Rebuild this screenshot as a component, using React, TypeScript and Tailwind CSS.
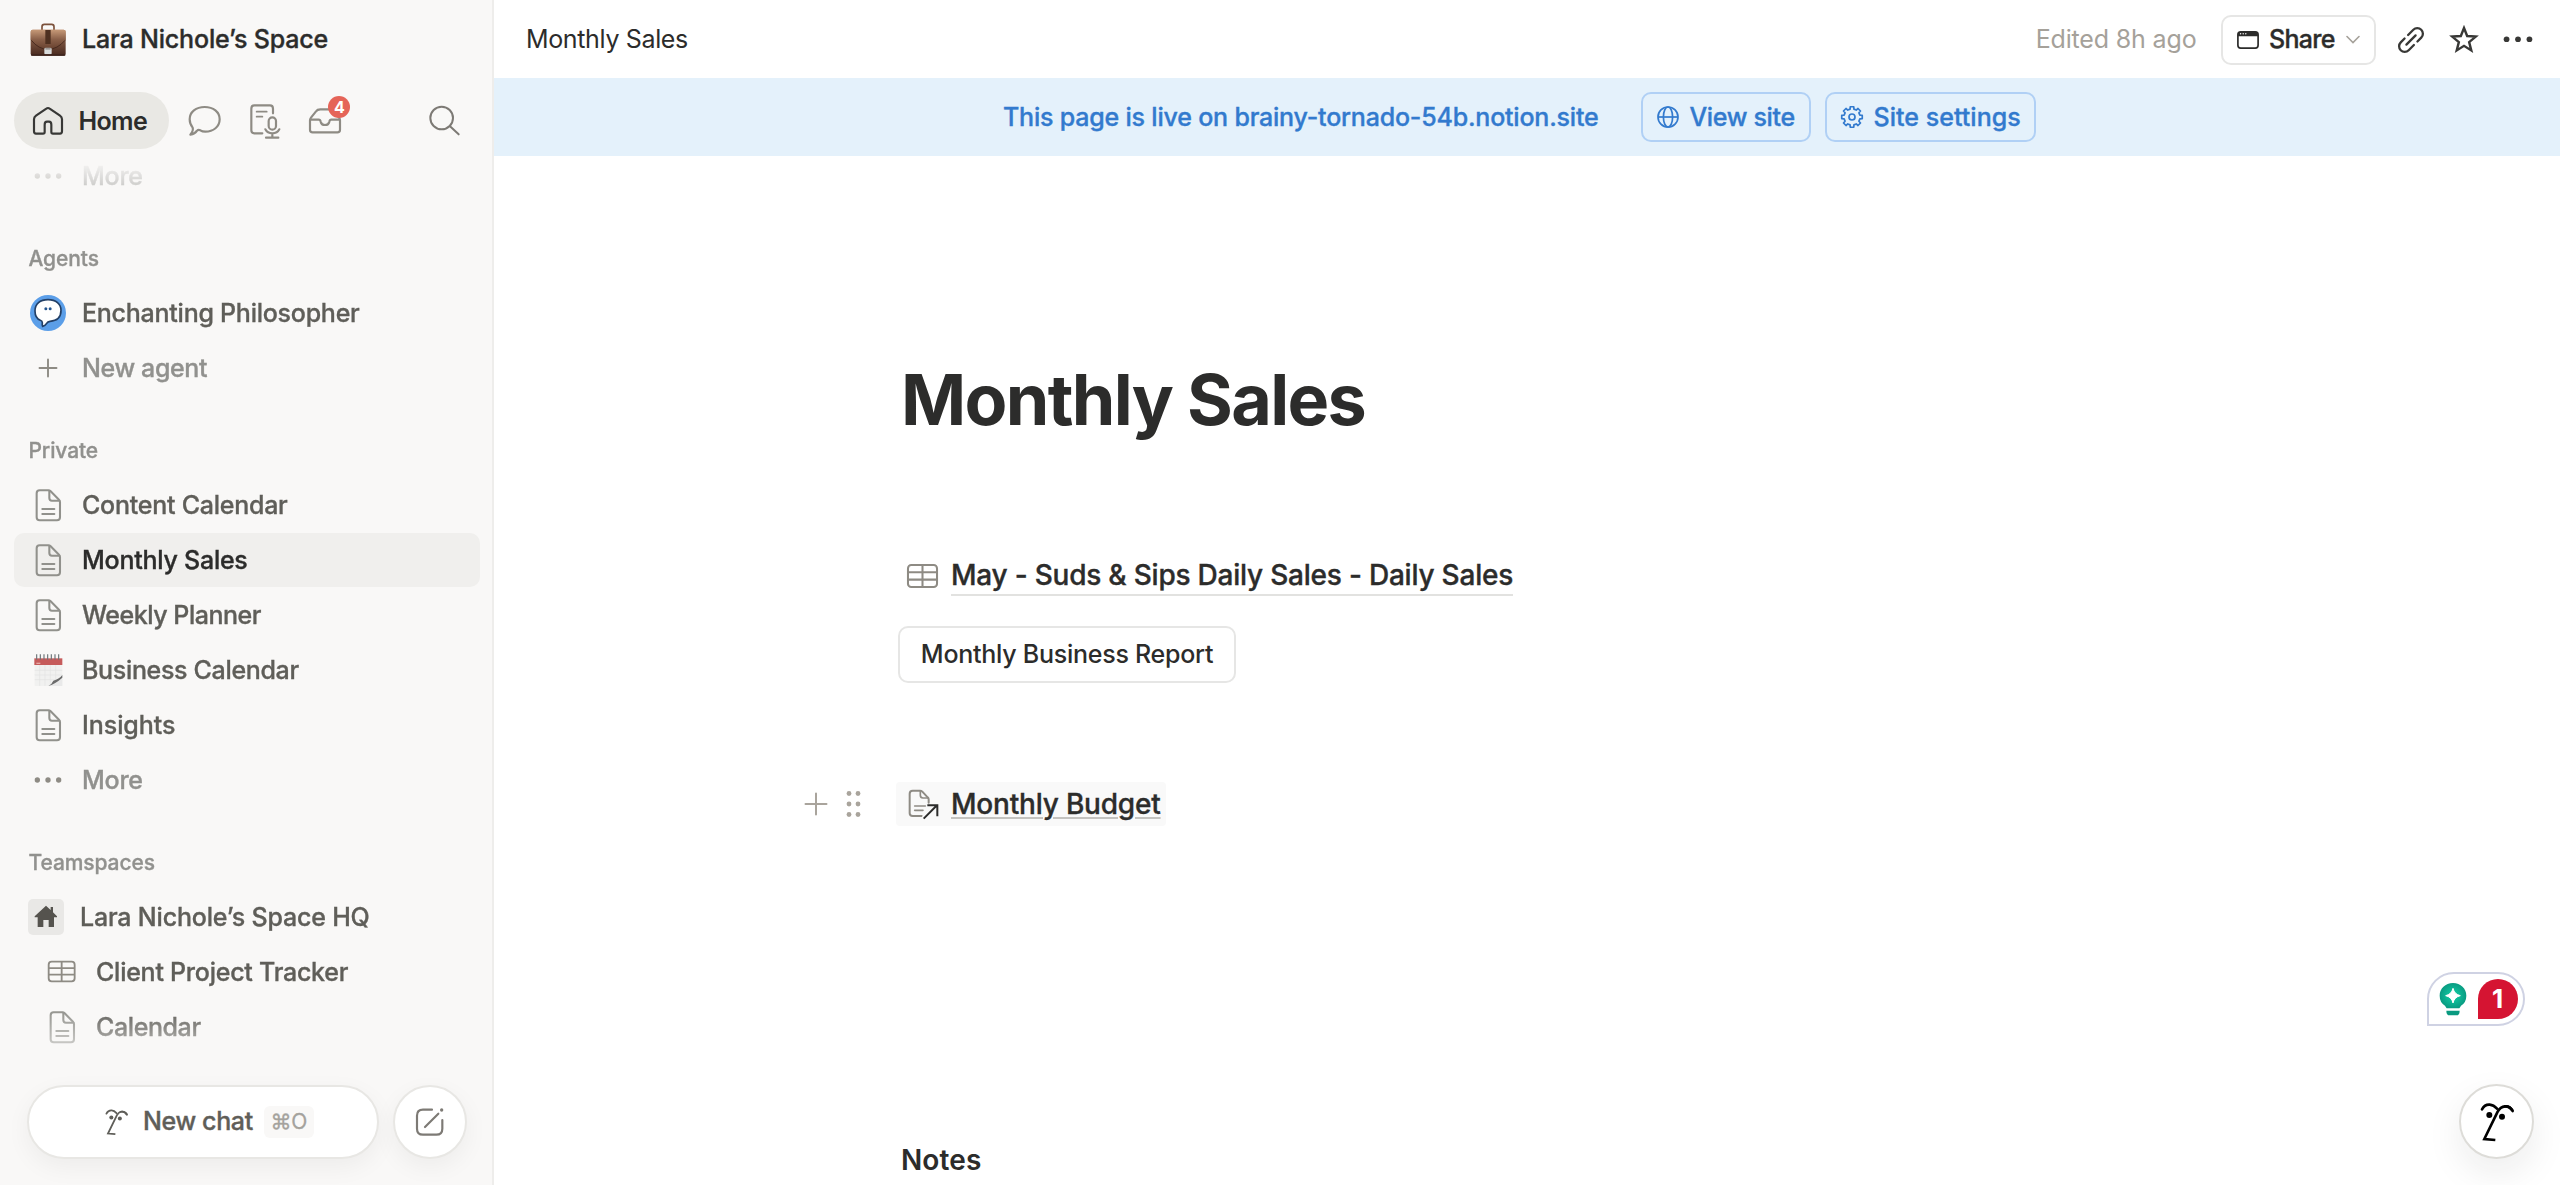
import type { ReactNode } from "react";

type IconName = "page" | "table" | "calendar" | "more" | "agent" | "plus";

interface SidebarItem {
  label: string;
  icon: IconName;
  muted?: boolean;
  active?: boolean;
  nested?: boolean;
  tracking?: string;
}

// Medium weight, nudged slightly heavier
const MEDIUM = "font-medium [-webkit-text-stroke:0.35px_currentColor]";

const AGENTS: SidebarItem[] = [
  { label: "Enchanting Philosopher", icon: "agent" },
  { label: "New agent", icon: "plus", muted: true, tracking: "tracking-[-0.37px]" },
];

const PRIVATE_PAGES: SidebarItem[] = [
  { label: "Content Calendar", icon: "page" },
  { label: "Monthly Sales", icon: "page", active: true },
  { label: "Weekly Planner", icon: "page", tracking: "tracking-[-0.48px]" },
  { label: "Business Calendar", icon: "calendar", tracking: "tracking-[-0.33px]" },
  { label: "Insights", icon: "page", tracking: "tracking-[-0.06px]" },
  { label: "More", icon: "more", muted: true },
];

const TEAM_PAGES: SidebarItem[] = [
  { label: "Client Project Tracker", icon: "table", nested: true },
  { label: "Calendar", icon: "page", nested: true, tracking: "tracking-[-0.4px]" },
];

// Alternating outer/inner points around a centre
function starPoints(cx: number, cy: number, outer: number, inner: number) {
  return Array.from({ length: 10 }, (_, i) => {
    const r = i % 2 ? inner : outer;
    const a = (Math.PI / 5) * i - Math.PI / 2;
    return `${(cx + r * Math.cos(a)).toFixed(2)},${(cy + r * Math.sin(a)).toFixed(2)}`;
  }).join(" ");
}

// Eight-tooth cog outline
function cogPoints(c: number, outer: number, inner: number) {
  const offsets: [number, number][] = [[-0.24, inner], [-0.17, outer], [0.17, outer], [0.24, inner]];
  return Array.from({ length: 8 }, (_, i) =>
    offsets
      .map(([d, r]) => {
        const a = (Math.PI / 4) * i + d;
        return `${(c + r * Math.cos(a)).toFixed(2)},${(c + r * Math.sin(a)).toFixed(2)}`;
      })
      .join(" ")
  ).join(" ");
}

function BriefcaseIcon() {
  return (
    <svg width="36" height="34" viewBox="0 0 108 102">
      <defs>
        <linearGradient id="case" x1="0" y1="0" x2="0" y2="1">
          <stop offset="0" stopColor="#b98a6b" />
          <stop offset="0.35" stopColor="#835a44" />
          <stop offset="1" stopColor="#48291f" />
        </linearGradient>
        <linearGradient id="flap" x1="0" y1="0" x2="0" y2="1">
          <stop offset="0" stopColor="#c79a78" />
          <stop offset="0.5" stopColor="#8a6049" />
          <stop offset="1" stopColor="#67412f" />
        </linearGradient>
      </defs>
      <path d="M36 22V11Q36 4 43 4H65Q72 4 72 11V22" fill="none" stroke="#7c513b" strokeWidth="5" />
      <rect x="2" y="20" width="105" height="78" rx="6" fill="url(#case)" />
      <path d="M2 26Q2 20 8 20H101Q107 20 107 26V50Q84 78 54 78T2 50Z" fill="url(#flap)" />
      <path d="M4 52Q26 79 54 79T105 52" fill="none" stroke="#40241b" strokeWidth="2.5" />
      <rect x="46" y="21" width="16" height="42" fill="#4e3020" />
      <rect x="43" y="75" width="22" height="19" rx="3" fill="#d9dcdc" />
      <rect x="46" y="74" width="16" height="6" fill="#9a9693" />
      <rect x="3" y="94" width="103" height="4" rx="2" fill="#3c231c" />
    </svg>
  );
}

function HomeIcon() {
  return (
    <svg width="32" height="30" viewBox="0 0 96 90" fill="none" stroke="#383836" strokeWidth="6.5" strokeLinejoin="round">
      <path d="M43 8Q48 4 53 8L84 29Q90 33 90 40V76Q90 83 84 83H63Q58 83 58 78V56Q58 47 51 47H45Q38 47 38 56V78Q38 83 33 83H12Q6 83 6 76V40Q6 33 12 29Z" />
    </svg>
  );
}

function ChatIcon() {
  return (
    <svg width="35.33" height="33.33" viewBox="0 0 106 100" fill="none" stroke="#8e8b84" strokeWidth="6.5" strokeLinejoin="round">
      <path d="M10 92Q20 80 17 71Q8 60 8 46C8 24 27 9 53 9S98 24 98 46S79 83 55 83Q46 83 40 79Q34 76 30 80Q24 90 10 92Z" />
    </svg>
  );
}

function MeetingNotesIcon() {
  return (
    <svg width="34" height="38" viewBox="0 0 102 114" fill="none" stroke="#8e8b84" strokeWidth="6.5" strokeLinecap="round">
      <path d="M75 34V20Q75 10 66 10H19Q10 10 10 20V85Q10 94 19 94H43" />
      <path d="M26 29H56M26 44H43" strokeWidth="5.5" />
      <rect x="62" y="46" width="22" height="37" rx="11" />
      <path d="M52 82Q58 94 73 94T94 82M73 94V106M54 107H91" />
    </svg>
  );
}

function InboxIcon() {
  return (
    <svg width="36" height="30" viewBox="0 0 108 90" fill="none" stroke="#8e8b84" strokeWidth="6.5" strokeLinejoin="round">
      <path d="M40 10H70Q78 10 82 15L97 36Q99 39 99 43V71Q99 79 91 79H17Q9 79 9 71V43Q9 39 12 35L27 16Q31 10 40 10Z" />
      <path d="M9 41H35Q40 41 41 47Q43 57 54 57T67 47Q68 41 73 41H99" />
    </svg>
  );
}

function SearchIcon() {
  return (
    <svg width="33.33" height="33.33" viewBox="0 0 100 100" fill="none" stroke="#7d7a75" strokeWidth="6" strokeLinecap="round">
      <circle cx="41" cy="42" r="34" />
      <path d="M66 67L92 91" />
    </svg>
  );
}

function PageIcon() {
  return (
    <svg width="30.67" height="36.67" viewBox="0 0 92 110" fill="none" stroke="#91918c" strokeWidth="6.2" strokeLinecap="round" strokeLinejoin="round">
      <path d="M20 10H46Q50 10 53 13L78 38Q81 41 81 45V91Q81 100 72 100H20Q11 100 11 91V19Q11 10 20 10Z" />
      <path d="M49 12V33Q49 41 57 41H79M28 66H64M28 81H64" />
    </svg>
  );
}

function TableIcon({ className }: { className: string }) {
  return (
    <svg className={className} viewBox="0 0 94 76" fill="none" stroke="#8e8b84" strokeWidth="5.5">
      <rect x="8" y="8" width="78" height="59" rx="9" />
      <path d="M47 8V67M8 27.5H86M8 47H86" />
    </svg>
  );
}

function CalendarEmoji() {
  return (
    <svg width="30.67" height="34.67" viewBox="0 0 92 104">
      <rect x="5" y="30" width="83" height="69" fill="#f1f1f0" />
      <path d="M5 52H88M5 66H88M5 80H88M20 36V99M36 36V99M52 36V99M68 36V99" stroke="#e2e2e2" strokeWidth="2" />
      <rect x="4" y="16" width="84" height="20" fill="#c65b5b" />
      <path d="M10 31H22" stroke="#e6a9a5" strokeWidth="4" />
      <path d="M11 4V20M22 4V20M33 4V20M44 4V20M55 4V20M66 4V20M77 4V20" stroke="#6e7578" strokeWidth="3.5" />
      <path d="M88 66Q80 80 62 84Q56 94 46 99H88Z" fill="#e9e9e9" />
      <path d="M88 66Q78 79 61 83Q58 92 46 99Q68 92 88 74Z" fill="#6b6b6b" />
    </svg>
  );
}

function AgentAvatar() {
  return (
    <svg width="36" height="36" viewBox="0 0 108 108">
      <circle cx="54" cy="54" r="54" fill="#5b9ee8" />
      <path
        d="M54 14C78 14 93 27 93 46C93 67 80 78 60 79Q53 80 50 85Q45 93 38 94Q36 89 37 83Q37 78 31 76C21 72 15 62 15 48C15 27 30 14 54 14Z"
        fill="#fff"
        stroke="#223f66"
        strokeWidth="5"
      />
      <circle cx="47.5" cy="41" r="4.5" fill="#24558f" />
      <circle cx="60.5" cy="41" r="4.5" fill="#24558f" />
    </svg>
  );
}

function Dots({ className }: { className: string }) {
  return (
    <svg className={className} viewBox="0 0 84 18" fill="currentColor">
      <circle cx="10" cy="9" r="8" />
      <circle cx="42" cy="9" r="8" />
      <circle cx="74" cy="9" r="8" />
    </svg>
  );
}

function FaceIcon({ className }: { className: string }) {
  return (
    <svg className={className} viewBox="0 0 108 125" fill="none" stroke="currentColor" strokeWidth="8" strokeLinecap="round">
      <path d="M9 25Q17 10 32 11Q44 12 54 23" />
      <path d="M101 30Q93 15 78 16Q64 17 56 32L16 114L49 117" strokeLinecap="butt" />
      <path d="M101 30Q93 15 78 16" />
      <circle cx="31" cy="42" r="9" fill="currentColor" stroke="none" />
      <circle cx="69" cy="47" r="9" fill="currentColor" stroke="none" />
    </svg>
  );
}

function ComposeIcon() {
  return (
    <svg width="31.33" height="32" viewBox="0 0 94 96" fill="none" stroke="#7d7a75" strokeWidth="6.5" strokeLinecap="round">
      <path d="M54 11H27Q9 11 9 29V68Q9 86 27 86H67Q85 86 85 68V42" />
      <path d="M33 63L73 23" />
      <circle cx="83" cy="12" r="5" fill="#7d7a75" stroke="none" />
    </svg>
  );
}

const ICONS: Record<IconName, ReactNode> = {
  page: <PageIcon />,
  table: <TableIcon className="h-[25.33px] w-[31.33px]" />,
  calendar: <CalendarEmoji />,
  more: <Dots className="h-[6px] w-7 text-[#8e8b84]" />,
  agent: <AgentAvatar />,
  plus: (
    <svg width="20" height="20" viewBox="0 0 20 20" stroke="#8e8b84" strokeWidth="1.9" strokeLinecap="round">
      <path d="M10 1.5V18.5M1.5 10H18.5" />
    </svg>
  ),
};

function SidebarRow({ item }: { item: SidebarItem }) {
  const color = item.active ? "text-[#2c2c2b]" : item.muted ? "text-[#91918e]" : "text-[#5f5e59]";
  return (
    <div
      className={`flex h-[54px] shrink-0 items-center gap-4 rounded-[10px] text-[25px] ${MEDIUM} ${color} ${
        item.active ? "bg-[#f0efed]" : ""
      } ${item.nested ? "pl-[30px]" : "pl-4"} ${item.tracking ?? "tracking-[-0.25px]"}`}
    >
      <span className="flex w-9 shrink-0 items-center justify-center">{ICONS[item.icon]}</span>
      <span className="pt-[2px] whitespace-nowrap">{item.label}</span>
    </div>
  );
}

function SidebarSection({ title, children }: { title: string; children: ReactNode }) {
  return (
    <section className="mt-[27px] flex flex-col">
      <h2 className={`h-14 pl-[14.5px] text-[21px] leading-[58px] tracking-[-0.1px] text-[#91918e] ${MEDIUM}`}>{title}</h2>
      <div className="flex flex-col gap-px">{children}</div>
    </section>
  );
}

function Sidebar() {
  return (
    <aside className="flex w-[494px] shrink-0 flex-col border-r-2 border-[#eeedeb] bg-[#f9f8f7]">
      <div className="flex h-[78px] shrink-0 items-center gap-4 pt-px pl-[30px]">
        <BriefcaseIcon />
        <span className={`text-[25px] tracking-[-0.16px] text-[#2c2c2b] ${MEDIUM}`}>Lara Nichole’s Space</span>
      </div>

      {/* Tabs */}
      <div className="mt-[14px] flex h-[57px] shrink-0 items-center pl-[14px]">
        <div className="flex h-[57px] w-[155px] items-center gap-[14.5px] rounded-full bg-[#e9e8e4] pl-[18px]">
          <HomeIcon />
          <span className="pt-[2px] text-[25px] font-semibold tracking-[-0.65px] text-[#2c2c2b]">Home</span>
        </div>
        <div className="ml-[18px]">
          <ChatIcon />
        </div>
        <div className="ml-[26px]">
          <MeetingNotesIcon />
        </div>
        <div className="relative ml-[25px]">
          <InboxIcon />
          <span className="absolute -top-[10px] left-[21px] flex h-[22px] w-[22px] items-center justify-center rounded-full bg-[#e56458] text-[16px] leading-none font-bold text-white">
            4
          </span>
        </div>
        <div className="ml-[85px]">
          <SearchIcon />
        </div>
      </div>

      <nav className="flex h-[926px] shrink-0 flex-col overflow-hidden px-[14px] pr-3 [mask-image:linear-gradient(to_bottom,transparent_12px,black_72px,black_860px,transparent_926px)]">
        <SidebarRow item={{ label: "More", icon: "more", muted: true }} />
        <SidebarSection title="Agents">
          {AGENTS.map((item) => (
            <SidebarRow key={item.label} item={item} />
          ))}
        </SidebarSection>
        <SidebarSection title="Private">
          {PRIVATE_PAGES.map((item) => (
            <SidebarRow key={item.label} item={item} />
          ))}
        </SidebarSection>
        <SidebarSection title="Teamspaces">
          <div className={`flex h-[54px] items-center gap-4 pl-[14px] text-[25px] tracking-[-0.18px] text-[#5f5e59] ${MEDIUM}`}>
            <span className="flex h-9 w-9 items-center justify-center rounded-[5px] bg-[#e9e8e6]">
              <svg width="26" height="25.33" viewBox="0 0 78 76" fill="#55534e">
                <path d="M39 5L53 18V9H60V25L72 37V40H63V69H47V48H31V69H14V40H5V37Z" />
              </svg>
            </span>
            <span className="pt-px">Lara Nichole’s Space HQ</span>
          </div>
          {TEAM_PAGES.map((item) => (
            <SidebarRow key={item.label} item={item} />
          ))}
        </SidebarSection>
      </nav>

      {/* Footer actions */}
      <div className="mt-[10px] flex gap-[14px] pl-[27px]">
        <button className="flex h-[74px] w-[352px] items-center rounded-full border-2 border-[#e8e7e4] bg-white pl-[75px] shadow-[0_8px_24px_rgba(25,25,25,0.05)]">
          <FaceIcon className="h-[28px] w-[25px] text-[#5f5e59]" />
          <span className={`ml-[14px] text-[25px] tracking-[-0.37px] text-[#5f5e59] ${MEDIUM}`}>New chat</span>
          <span className="ml-[11px] flex h-8 w-[50px] items-center justify-center rounded-md bg-[#f9f8f7] text-[21px] tracking-[-0.3px] text-[#a4a29d] [-webkit-text-stroke:0.3px_currentColor]">
            ⌘O
          </span>
        </button>
        <button className="flex h-[74px] w-[74px] items-center justify-center rounded-full border-2 border-[#e8e7e4] bg-white shadow-[0_8px_24px_rgba(25,25,25,0.05)]">
          <ComposeIcon />
        </button>
      </div>
    </aside>
  );
}

function TopBar() {
  return (
    <header className="flex h-[78px] shrink-0 items-center pt-px pl-8 text-[25px] text-[#2c2c2b]">
      <span className="tracking-[-0.35px]">Monthly Sales</span>
      <span className="ml-auto tracking-[-0.16px] text-[#a5a19a]">Edited 8h ago</span>
      <button className={`ml-[24px] flex h-[50px] w-[155px] items-center rounded-[10px] border-2 border-[#e6e6e5] pl-[13px] tracking-[-0.7px] ${MEDIUM}`}>
        <svg width="24" height="20" viewBox="0 0 24 20">
          <rect x="1.9" y="1.9" width="20.2" height="16.2" rx="2.8" fill="none" stroke="#2c2c2b" strokeWidth="1.7" />
          <path d="M1.9 6.2V4.5Q1.9 1.9 4.5 1.9H19.5Q22.1 1.9 22.1 4.5V6.2Z" fill="#2c2c2b" />
          <circle cx="4.6" cy="3.8" r="0.7" fill="#fff" />
          <circle cx="7.2" cy="3.8" r="0.7" fill="#fff" />
          <circle cx="9.8" cy="3.8" r="0.7" fill="#fff" />
        </svg>
        <span className="ml-[9.5px]">Share</span>
        <svg className="ml-[11px]" width="14" height="9" viewBox="0 0 14 9" fill="none" stroke="#a5a19a" strokeWidth="1.6" strokeLinecap="round">
          <path d="M1 1.5L7 7.5L13 1.5" />
        </svg>
      </button>
      <svg className="ml-[20px]" width="30" height="30" viewBox="-15 -15 30 30" fill="none" stroke="#383836" strokeWidth="2.3" strokeLinecap="round">
        <g transform="rotate(-45)">
          <path d="M1.5 -5.6H8.9A5.6 5.6 0 0 1 8.9 5.6H3.5" />
          <path d="M-1.5 5.6H-8.9A5.6 5.6 0 0 1 -8.9 -5.6H-3.5" />
          <path d="M-6.5 0H6.5" />
        </g>
      </svg>
      <svg className="ml-[23px]" width="30" height="30" viewBox="0 0 30 30" fill="none" stroke="#383836" strokeWidth="2.4" strokeLinejoin="miter">
        <polygon points={starPoints(15, 15.4, 12.4, 5.4)} />
      </svg>
      <Dots className="mr-[27px] ml-[24.5px] h-[6.5px] w-[30px] text-[#383836]" />
    </header>
  );
}

function LiveBanner() {
  return (
    <div className={`flex h-[78px] shrink-0 items-center bg-[#e4f1fb] pl-[509px] text-[25px] whitespace-nowrap text-[#327ace] ${MEDIUM}`}>
      <span className="w-[638px] pt-[2px] tracking-[-0.2px]">This page is live on brainy-tornado-54b.notion.site</span>
      <button className="flex h-[50px] w-[170px] items-center rounded-[10px] border-2 border-[#b0d0f5] pl-[13px] tracking-[-0.35px]">
        <svg width="24" height="24" viewBox="0 0 24 24" fill="none" stroke="#327ace" strokeWidth="1.7">
          <circle cx="12" cy="12" r="10" />
          <ellipse cx="12" cy="12" rx="4.6" ry="10" />
          <path d="M2 12H22" />
        </svg>
        <span className="ml-[9.5px] pt-px">View site</span>
      </button>
      <button className="ml-[14px] flex h-[50px] w-[211px] items-center rounded-[10px] border-2 border-[#b0d0f5] pl-[13px] tracking-[0.03px]">
        <svg width="24" height="24" viewBox="0 0 24 24" fill="none" stroke="#327ace" strokeWidth="1.7" strokeLinejoin="round">
          <polygon points={cogPoints(12, 10.4, 8.1)} />
          <circle cx="12" cy="12" r="3" />
        </svg>
        <span className="ml-[9.5px] pt-px">Site settings</span>
      </button>
    </div>
  );
}

function PageBody() {
  return (
    <article className="flex flex-col items-start pl-[402px] text-[#2c2c2b]">
      <h1 className="mt-[202px] h-[84px] pl-[5px] text-[70px] leading-[84px] font-bold tracking-[-1.68px]">Monthly Sales</h1>

      <div className="mt-[112px] flex h-11 items-center pl-[9px]">
        <TableIcon className="h-[28.5px] w-[35px]" />
        <span className={`ml-[11px] h-10 border-b-2 border-[#e2e2e0] text-[28px] leading-[38px] tracking-[-0.22px] ${MEDIUM}`}>
          May - Suds &amp; Sips Daily Sales - Daily Sales
        </span>
      </div>

      <button className="mt-[28px] ml-[2px] flex h-[57px] w-[338px] items-center justify-center rounded-[10px] border-2 border-[#e6e6e5] text-[25px] font-medium tracking-[-0.26px]">
        Monthly Business Report
      </button>

      {/* Hovered block with its drag handle */}
      <div className="mt-[99px] -ml-[93px] flex h-11 items-center">
        <svg width="26" height="26" viewBox="0 0 26 26" stroke="#a9a49c" strokeWidth="2" strokeLinecap="round">
          <path d="M13 2.5V23.5M2.5 13H23.5" />
        </svg>
        <svg className="ml-[17px]" width="16" height="28" viewBox="0 0 16 28" fill="#a9a49c">
          {[3.5, 14, 24.5].map((cy) => (
            <g key={cy}>
              <circle cx="3" cy={cy} r="2.4" />
              <circle cx="12" cy={cy} r="2.4" />
            </g>
          ))}
        </svg>
        <div className="ml-[34px] flex h-11 w-[270px] items-center rounded-sm bg-[#f9f9f9] pl-[11px]">
          <svg width="32" height="32.67" viewBox="0 0 96 98" fill="none" strokeWidth="6" strokeLinecap="round">
            <g stroke="#8e8b84">
              <path d="M65 44V34Q65 31 62 28L46 11Q43 8 39 8H17Q8 8 8 17V76Q8 84 17 84H44" />
              <path d="M40 10V22Q40 30 48 30H63M23 54H55M23 67H48" strokeWidth="5" />
            </g>
            <path d="M50 92L89 53" stroke="#f9f9f9" strokeWidth="14" strokeLinecap="butt" />
            <path d="M50 92L90 52M61 52H91V85" stroke="#2c2c2b" strokeLinecap="butt" />
          </svg>
          <span className={`ml-[12px] text-[28px] tracking-[-0.2px] underline decoration-[#c4c3c0] decoration-2 underline-offset-[3px] ${MEDIUM}`}>
            Monthly Budget
          </span>
        </div>
      </div>

      <h3 className="mt-[312px] h-11 pl-[5px] text-[28px] leading-[44px] font-semibold tracking-[0.1px]">Notes</h3>
    </article>
  );
}

function FloatingWidgets() {
  return (
    <>
      <div className="absolute top-[972px] left-[2427px] flex h-[54px] w-[98px] items-center rounded-[27px] rounded-bl-none border-2 border-[#cfd2e3] bg-white pl-[8px]">
        <svg width="32" height="40" viewBox="0 0 96 120">
          <defs>
            <radialGradient id="bulb" cx="0.5" cy="0.5" r="0.6">
              <stop offset="0.3" stopColor="#0fbf9b" />
              <stop offset="1" stopColor="#07907a" />
            </radialGradient>
          </defs>
          <path d="M48 12C71 12 88 29 88 50Q88 70 72 80Q68 86 67 88H29Q28 86 24 80Q8 70 8 50C8 29 25 12 48 12Z" fill="url(#bulb)" />
          <path d="M48 28Q52 46 70 50Q52 54 48 72Q44 54 26 50Q44 46 48 28Z" fill="#fff" stroke="#fff" strokeWidth="3" strokeLinejoin="round" />
          <path d="M28 95H68Q68 109 58 109H38Q28 109 28 95Z" fill="#0a9a80" />
        </svg>
        <span className="ml-[8.5px] flex h-[40px] w-[40px] items-center justify-center rounded-full rounded-bl-none bg-[#d51432] text-[26px] leading-none font-bold text-white">
          1
        </span>
      </div>
      <button className="absolute top-[1084px] left-[2459px] flex h-[75px] w-[75px] items-center justify-center rounded-full border-2 border-[#dddcd8] bg-white shadow-[0_14px_36px_rgba(25,25,25,0.08)]">
        <FaceIcon className="h-[41.67px] w-9 text-black" />
      </button>
    </>
  );
}

export default function App() {
  return (
    <div className="relative flex h-[1185px] w-[2560px] overflow-hidden bg-white font-['Inter',sans-serif]">
      <Sidebar />
      <main className="flex min-w-0 flex-1 flex-col">
        <TopBar />
        <LiveBanner />
        <PageBody />
      </main>
      <FloatingWidgets />
    </div>
  );
}
